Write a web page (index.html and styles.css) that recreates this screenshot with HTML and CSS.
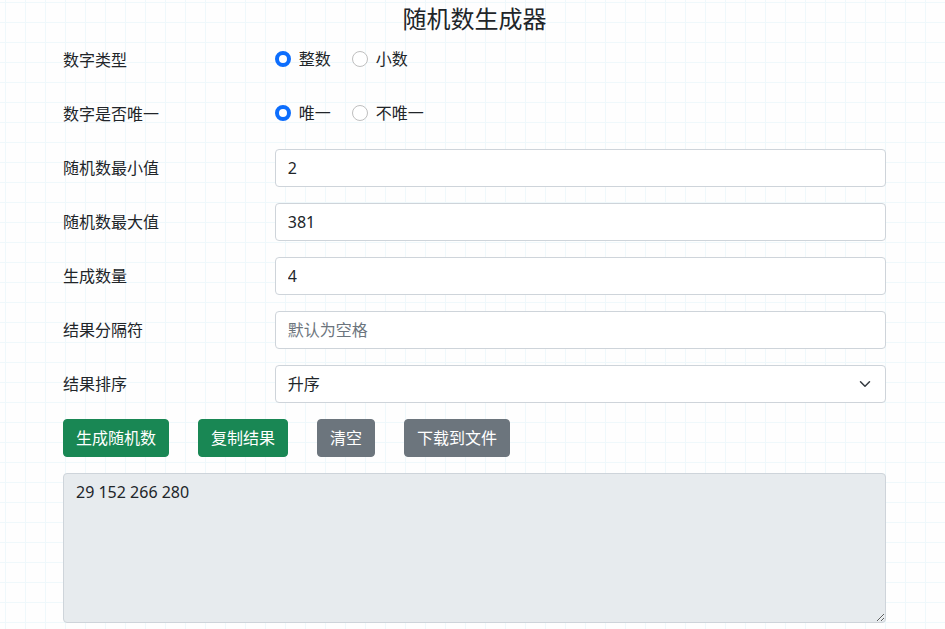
FILE: index.html
```html
<!DOCTYPE html>
<html lang="zh-CN">
<head>
  <meta charset="UTF-8">
  <meta name="viewport" content="width=device-width, initial-scale=1.0">
  <title>随机数生成器</title>
  <link rel="stylesheet" href="styles.css">
</head>
<body>
  <main class="container">
    <h1 class="title">随机数生成器</h1>

    <form class="generator">
      <div class="form-row" role="radiogroup" aria-labelledby="type-label">
        <span class="form-label" id="type-label">数字类型</span>
        <div class="form-checks">
          <label class="form-check"><input class="form-radio" type="radio" name="type" value="int" checked>整数</label>
          <label class="form-check"><input class="form-radio" type="radio" name="type" value="float">小数</label>
        </div>
      </div>

      <div class="form-row" role="radiogroup" aria-labelledby="unique-label">
        <span class="form-label" id="unique-label">数字是否唯一</span>
        <div class="form-checks">
          <label class="form-check"><input class="form-radio" type="radio" name="unique" value="1" checked>唯一</label>
          <label class="form-check"><input class="form-radio" type="radio" name="unique" value="0">不唯一</label>
        </div>
      </div>

      <div class="form-row">
        <label class="form-label" for="min">随机数最小值</label>
        <input class="form-control" type="text" id="min" name="min" value="2">
      </div>

      <div class="form-row">
        <label class="form-label" for="max">随机数最大值</label>
        <input class="form-control" type="text" id="max" name="max" value="381">
      </div>

      <div class="form-row">
        <label class="form-label" for="count">生成数量</label>
        <input class="form-control" type="text" id="count" name="count" value="4">
      </div>

      <div class="form-row">
        <label class="form-label" for="separator">结果分隔符</label>
        <input class="form-control" type="text" id="separator" name="separator" placeholder="默认为空格">
      </div>

      <div class="form-row">
        <label class="form-label" for="sort">结果排序</label>
        <div class="select-wrap">
          <select class="form-control form-select" id="sort" name="sort">
            <option>升序</option>
            <option>降序</option>
            <option>不排序</option>
          </select>
          <svg class="select-arrow" viewBox="0 0 16 16" aria-hidden="true">
            <path fill="none" stroke="#343a40" stroke-linecap="round" stroke-linejoin="round" stroke-width="2" d="m2 5 6 6 6-6"/>
          </svg>
        </div>
      </div>

      <div class="buttons">
        <button class="btn btn-success" type="button">生成随机数</button>
        <button class="btn btn-success" type="button">复制结果</button>
        <button class="btn btn-secondary" type="button">清空</button>
        <button class="btn btn-secondary" type="button">下载到文件</button>
      </div>

      <textarea class="form-control result" aria-label="结果" readonly>29 152 266 280</textarea>
    </form>
  </main>
</body>
</html>
```
FILE: styles.css
```css
* {
  box-sizing: border-box;
}

body {
  margin: 0;
  color: #212529;
  font: 16px/24px "Noto Sans", "Noto Sans CJK SC", sans-serif;
  background-color: #fefefe;
  background-image:
    linear-gradient(90deg, #eff8fb 1px, transparent 1px),
    linear-gradient(#eff8fb 1px, transparent 1px);
  background-size: 20px 20px;
  background-position: 5px 2px;
}

.container {
  padding: 4px 59px 6px 63px;
}

.title {
  margin: 0 0 8px;
  font-size: 24px;
  font-weight: 400;
  line-height: 29px;
  text-align: center;
}

.form-row {
  display: grid;
  grid-template-columns: 1fr 3fr;
  column-gap: 8px;
  min-height: 38px;
  margin-bottom: 16px;
}

.form-label {
  padding: 7px 0;
}

.form-checks {
  display: flex;
  gap: 21px;
  padding-top: 6px;
}

.form-check {
  display: flex;
  gap: 8px;
}

.form-radio {
  appearance: none;
  width: 16px;
  height: 16px;
  margin: 4px 0 0;
  border: 1px solid #bfbfbf;
  border-radius: 50%;
  background: #fff;
}

.form-radio:checked {
  border: 4px solid #0d6efd;
}

.form-control {
  display: block;
  width: 100%;
  height: 38px;
  padding: 6px 12px;
  border: 1px solid #ced4da;
  border-radius: 4px;
  color: inherit;
  font: inherit;
  background: #fff;
}

.form-control::placeholder {
  color: #6c757d;
  opacity: 1;
}

.select-wrap {
  position: relative;
}

.form-select {
  appearance: none;
  padding-right: 36px;
}

.select-arrow {
  position: absolute;
  top: 13px;
  right: 15px;
  width: 12px;
  height: 12px;
  pointer-events: none;
}

.buttons {
  display: flex;
  flex-wrap: wrap;
  gap: 29px;
  margin-bottom: 16px;
}

.btn {
  height: 38px;
  padding: 6px 12px;
  border: 1px solid transparent;
  border-radius: 4px;
  color: #fff;
  font: inherit;
}

.btn-success {
  border-color: #198754;
  background: #198754;
}

.btn-secondary {
  border-color: #6c757d;
  background: #6c757d;
}

.result {
  height: 150px;
  background: #e7ebee;
  resize: vertical;
}
```
